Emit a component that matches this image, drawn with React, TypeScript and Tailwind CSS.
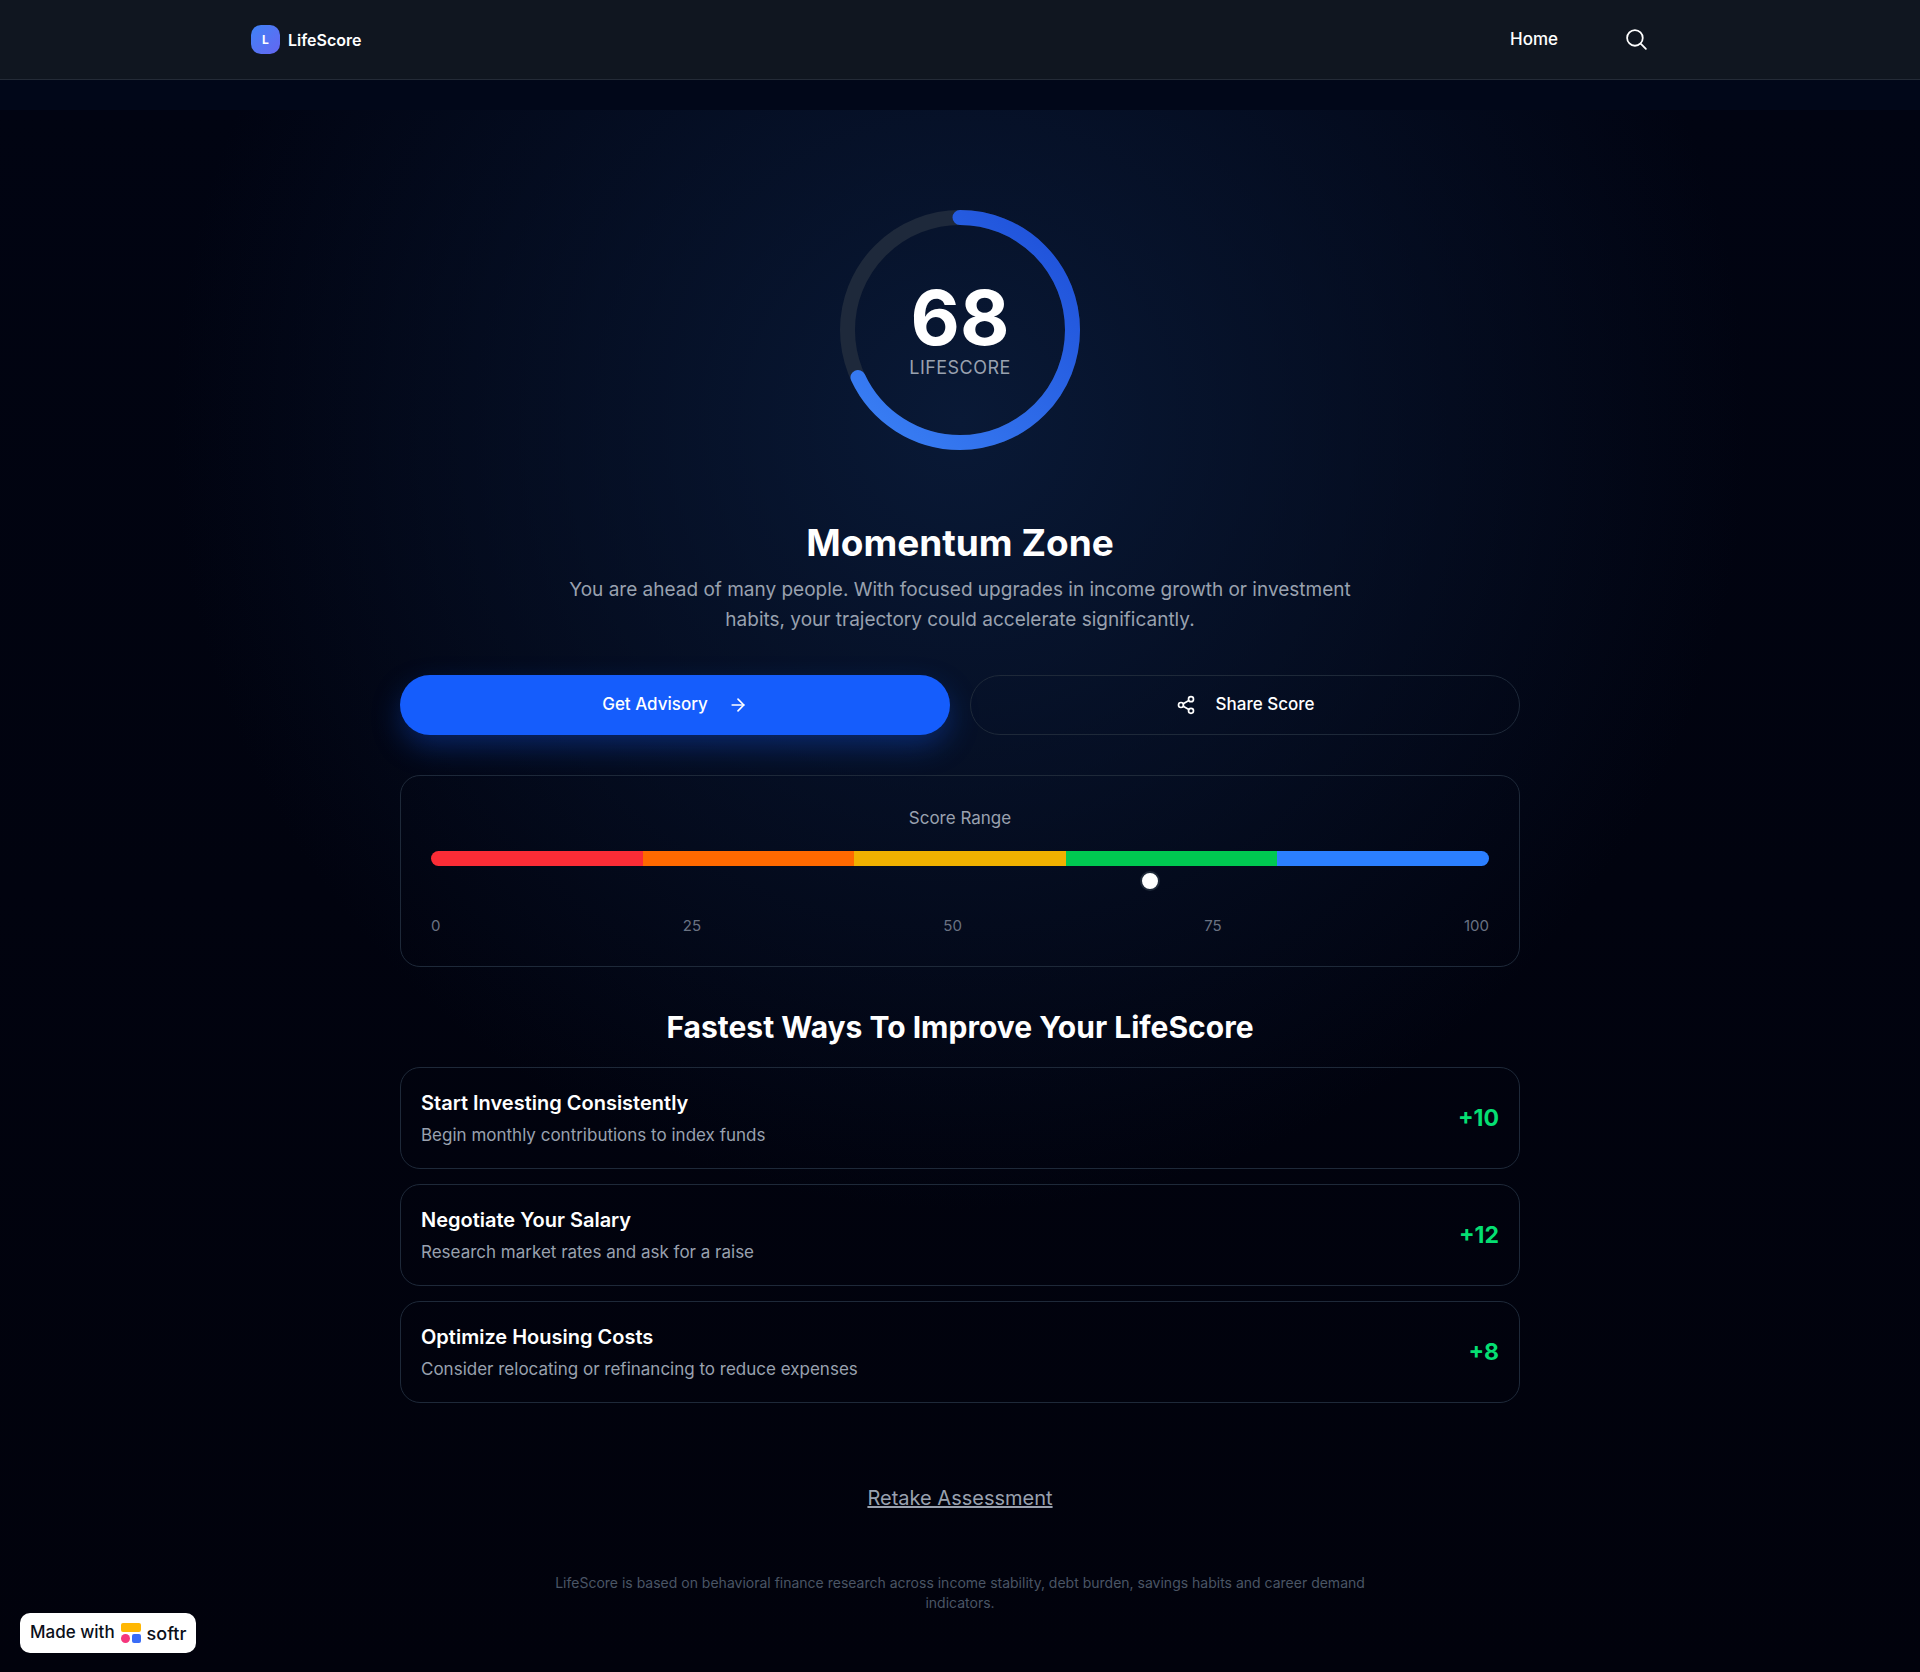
import React from 'react';
import { ArrowRight, Share2 } from 'lucide-react';

const score = 68;

const scoreBands = ['bg-red-500', 'bg-orange-500', 'bg-yellow-500', 'bg-green-500', 'bg-blue-500'];
const scaleLabels = [0, 25, 50, 75, 100];

const improvements = [
  { title: 'Start Investing Consistently', text: 'Begin monthly contributions to index funds', points: 10 },
  { title: 'Negotiate Your Salary', text: 'Research market rates and ask for a raise', points: 12 },
  { title: 'Optimize Housing Costs', text: 'Consider relocating or refinancing to reduce expenses', points: 8 },
];

const Header: React.FC = () => (
  <header className="border-b border-[#242b37] bg-[#101620]">
    <div className="mx-auto flex h-[79px] max-w-[1418px] items-center justify-between">
      <a href="#" className="flex items-center gap-2">
        <span className="flex size-[29px] items-center justify-center rounded-[10px] bg-linear-to-br from-[#3b82f6] to-[#6366f1] text-xs font-bold">
          L
        </span>
        <span className="text-base font-semibold">LifeScore</span>
      </a>
      <nav className="flex items-center gap-[46px]">
        <a href="#" className="text-[17px] font-medium">Home</a>
        <button type="button" aria-label="Search" className="px-5">
          <svg className="size-[25px]" viewBox="0 0 24 24" fill="none" stroke="currentColor" strokeWidth="1.7" strokeLinecap="round" strokeLinejoin="round">
            <path d="m21 21-5.197-5.197m0 0A7.5 7.5 0 1 0 5.196 5.196a7.5 7.5 0 0 0 10.607 10.607Z" />
          </svg>
        </button>
      </nav>
    </div>
  </header>
);

const ScoreRing: React.FC = () => {
  const radius = 112.5;
  const length = 2 * Math.PI * radius;

  return (
    <div className="grid size-60 place-items-center">
      <svg className="col-start-1 row-start-1 size-60 -rotate-90" viewBox="0 0 240 240" fill="none" strokeWidth="15">
        <defs>
          <linearGradient id="ring" x1="0%" y1="0%" x2="100%" y2="100%">
            <stop offset="0%" stopColor="#3b82f6" />
            <stop offset="100%" stopColor="#1d4ed8" />
          </linearGradient>
        </defs>
        <circle cx="120" cy="120" r={radius} stroke="#1e293b" />
        <circle
          cx="120"
          cy="120"
          r={radius}
          stroke="url(#ring)"
          strokeLinecap="round"
          strokeDasharray={length}
          strokeDashoffset={length * (1 - score / 100)}
        />
      </svg>
      <div className="col-start-1 row-start-1 text-center">
        <div className="text-[76px] leading-[75px] font-bold">{score}</div>
        <div className="text-[18px] leading-[25px] tracking-wide text-gray-400">LIFESCORE</div>
      </div>
    </div>
  );
};

const ScoreRange: React.FC = () => (
  <section className="mt-10 rounded-[20px] border border-gray-800 p-[30px]">
    <h2 className="text-center text-[17px] leading-[25px] text-gray-400">Score Range</h2>
    <div className="mt-5 flex h-[15px] overflow-hidden rounded-full">
      {scoreBands.map((band) => (
        <div key={band} className={`flex-1 ${band}`} />
      ))}
    </div>
    {/* Marker under the bar */}
    <div className="relative mt-[5px] h-5">
      <div
        className="absolute size-5 -translate-x-1/2 rounded-full border-2 border-gray-800 bg-white"
        style={{ left: `${score}%` }}
      />
    </div>
    <div className="mt-[25px] flex justify-between text-[15px] leading-5 text-gray-500">
      {scaleLabels.map((label) => (
        <span key={label}>{label}</span>
      ))}
    </div>
  </section>
);

const SoftrBadge: React.FC = () => (
  <a
    href="#"
    className="fixed bottom-[19px] left-5 flex h-10 items-center gap-[6px] rounded-[10px] bg-white px-[10px] text-[17px] font-medium text-[#0b0f1a]"
  >
    Made with
    <svg className="size-5" viewBox="0 0 20 20">
      <rect width="20" height="9" rx="2" fill="#ffb703" />
      <circle cx="4.5" cy="15.5" r="4.5" fill="#f5367c" />
      <rect x="11" y="11" width="9" height="9" rx="2" fill="#3a6cf6" />
    </svg>
    <span className="text-[18px]">softr</span>
  </a>
);

const App: React.FC = () => {
  return (
    <div className="min-h-screen bg-[#010719] font-['Inter','Liberation_Sans',sans-serif] text-white">
      <Header />
      <main className="mt-[30px] bg-[radial-gradient(circle_at_50%_20%,#091936,transparent_50%),linear-gradient(#010412,#01020c)] px-5 pt-[100px] pb-[59px]">
        <div className="mx-auto max-w-[1120px]">
          <div className="flex flex-col items-center text-center">
            <ScoreRing />
            <h1 className="mt-[70px] text-[37px] leading-[45px] font-bold">Momentum Zone</h1>
            <p className="mt-[10px] max-w-[840px] text-[19px] leading-[30px] text-gray-400">
              You are ahead of many people. With focused upgrades in income growth or investment habits, your trajectory could accelerate significantly.
            </p>
          </div>

          <div className="mt-10 grid grid-cols-1 gap-5 text-[17px] font-medium md:grid-cols-2">
            <button type="button" className="flex h-[60px] items-center justify-center gap-5 rounded-full bg-blue-600 shadow-[0_12px_30px_-2px_rgba(21,93,252,0.35)]">
              Get Advisory
              <ArrowRight className="size-5" />
            </button>
            <button type="button" className="flex h-[60px] items-center justify-center gap-5 rounded-full border border-gray-800">
              <Share2 className="size-5" />
              Share Score
            </button>
          </div>

          <ScoreRange />

          <section className="mt-10">
            <h2 className="text-center text-[30px] leading-10 font-bold">Fastest Ways To Improve Your LifeScore</h2>
            <ul className="mt-5 flex flex-col gap-[15px]">
              {improvements.map((item) => (
                <li key={item.title} className="flex items-center justify-between rounded-[20px] border border-gray-800 p-5">
                  <div>
                    <h3 className="text-[20px] leading-[30px] font-semibold">{item.title}</h3>
                    <p className="mt-[5px] text-[17px] leading-[25px] text-gray-400">{item.text}</p>
                  </div>
                  <span className="text-[23px] font-bold text-green-400">+{item.points}</span>
                </li>
              ))}
            </ul>
          </section>

          <div className="mt-20 text-center text-[20px] leading-[30px]">
            <a href="#" className="text-gray-400 underline">Retake Assessment</a>
          </div>
          <p className="mx-auto mt-[60px] max-w-[840px] text-center text-sm leading-5 text-gray-600">
            LifeScore is based on behavioral finance research across income stability, debt burden, savings habits and career demand indicators.
          </p>
        </div>
      </main>
      <SoftrBadge />
    </div>
  );
};

export default App;
